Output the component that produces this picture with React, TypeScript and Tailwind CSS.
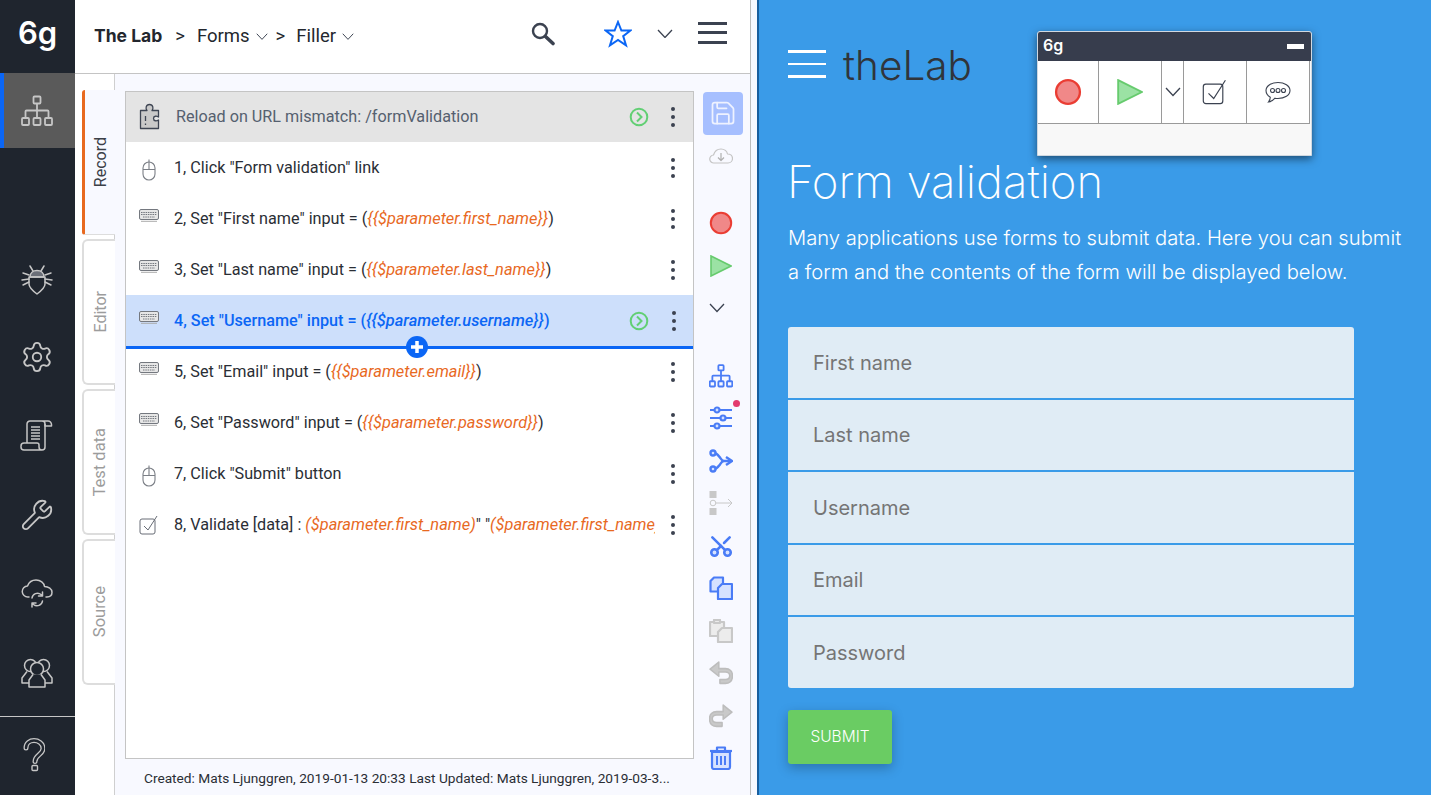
import React from "react";
import { Settings, Wrench, Scissors, Save } from "lucide-react";

const G = "#c6c6c6";
const B = "#4a7cf6";
const BL = "#d6e2ff";
const D = "#3b4250";

function Hier({ c, w = 32, sw = 1.8 }: { c: string; w?: number; sw?: number }) {
  return (
    <svg width={w} height={w} viewBox="0 0 32 32" fill="none" stroke={c} strokeWidth={sw}>
      <rect x="12.5" y="1.5" width="7" height="7" rx="1" />
      <rect x="1" y="23" width="7" height="7" rx="1" />
      <rect x="12.5" y="23" width="7" height="7" rx="1" />
      <rect x="24" y="23" width="7" height="7" rx="1" />
      <path d="M16 8.5V23M4.5 23v-6.5a1 1 0 0 1 1-1h21a1 1 0 0 1 1 1V23" />
    </svg>
  );
}

function Bug() {
  return (
    <svg width="32" height="34" viewBox="0 0 32 34" fill="none" stroke={G} strokeWidth="1.5" strokeLinecap="round" strokeLinejoin="round">
      <path d="M9 4l3 5M23 4l-3 5" />
      <path d="M9 15c0-4 3-6.5 7-6.5s7 2.500 7 6.500z" fill="#6b6f78" />
      <path d="M8 15h16v7c0 4-4 7-8 10-4-3-8-6-8-10z" />
      <path d="M8 13L2 11M8 17l-7 1M8 20l-6 3M24 13l6-2M24 17l7 1M24 20l6 3" />
    </svg>
  );
}

function Scroll() {
  return (
    <svg width="33" height="32" viewBox="0 0 33 32" fill="none" stroke={G} strokeWidth="1.500" strokeLinejoin="round">
      <path d="M7 23V4a3 3 0 0 1 3-3h18a3.500 3.500 0 0 1 3.500 3.500V6H25V4a3 3 0 0 0-3-3" />
      <path d="M25 4v23a3 3 0 0 1-3 3H4a3 3 0 0 1-3-3v-1a3 3 0 0 1 3-3h13a2 2 0 0 1 2 2v2a3 3 0 0 0 3 3" />
      <path d="M11 7h9M11 10h9M11 13h9M11 16h9M11 19h9" strokeWidth="1.300" />
    </svg>
  );
}

function CloudSync() {
  return (
    <svg width="32" height="32" viewBox="0 0 32 32" fill="none" stroke={G} strokeWidth="1.5" strokeLinecap="round" strokeLinejoin="round">
      <path d="M8 19H7a5.500 5.500 0 0 1-.5-11C8 4 11.500 2 15 2c4.500 0 8 3 8.500 6.500 4 0 7.500 2.500 7.500 5.800 0 3-2 4.700-5 4.700h-1" />
      <path d="M11 20a5.500 5.500 0 0 1 9-3.500l1.500 1.500M21.500 14v4h-4" />
      <path d="M21.500 23a5.500 5.500 0 0 1-9 3.500L11 25M11 29v-4h4" />
    </svg>
  );
}

function People() {
  return (
    <svg width="32" height="30" viewBox="0 0 32 30" fill="none" stroke={G} strokeWidth="1.5" strokeLinejoin="round">
      <circle cx="9.500" cy="7.500" r="6" />
      <circle cx="22.500" cy="7.500" r="6" />
      <path d="M6 13.500L1 20v5h7M26 13.500L31 20v5h-7" />
      <circle cx="16" cy="11" r="6.500" fill="#1f252e" />
      <path d="M12 16.500L8 22v7h16v-7l-4-5.500" fill="#1f252e" />
    </svg>
  );
}

function Question() {
  const d = "M5 10c0-5 4-7.500 8-7.500s9 2.500 9 8c0 6-8 6.500-8 13";
  return (
    <svg width="24" height="34" viewBox="0 0 24 34" fill="none" strokeLinecap="round">
      <path d={d} stroke={G} strokeWidth="5" />
      <path d={d} stroke="#1f252e" strokeWidth="2.400" />
      <rect x="11" y="27.500" width="5.500" height="5" rx="1" stroke={G} strokeWidth="1.400" />
    </svg>
  );
}

function Puzzle() {
  return (
    <svg width="26" height="28" viewBox="0 0 26 28" fill="#c9c9c9" stroke="#3d4452" strokeWidth="1.300" strokeLinejoin="round">
      <path d="M1.500 7.500h6.500c-1.500-1.500-1.500-6 2.500-6s4 4.500 2.500 6h6.500v6.500c-1.500-1-5-1.500-5 1.500s3.500 2.500 5 1.500v8.500h-18z" />
      <path d="M6.500 13v5M6.500 20.500v1.500" fill="none" />
    </svg>
  );
}

function Mouse() {
  return (
    <svg width="14" height="22" viewBox="0 0 14 22" fill="none" stroke="#7b7f86" strokeWidth="1.100" className="ml-[3px] mt-[4px]">
      <rect x="1" y="3" width="12" height="18" rx="6" />
      <path d="M1 10.500h12M7 0.500V10.500" />
    </svg>
  );
}

function Keyboard({ c = "#74787f" }: { c?: string }) {
  return (
    <svg width="20" height="13" viewBox="0 0 20 13" fill="#e6e6e6" stroke={c} strokeWidth="1" className="mb-[7px]">
      <rect x="0.500" y="0.500" width="19" height="10" rx="1.500" />
      <path d="M2 3.500h16M2 5.500h16M4 8h12" strokeDasharray="1.500 0.800" />
      <path d="M2 12.300h16" stroke="#aaaaaa" />
    </svg>
  );
}

function Check({ c = "#686d76", s = 20 }: { c?: string; s?: number }) {
  return (
    <svg width={s} height={s} viewBox="0 0 20 20" fill="none" stroke={c} strokeWidth={s > 20 ? 0.9 : 1}>
      <rect x="1" y="4" width="15" height="15" rx="2" />
      <path d="M5 11l4 4 9-14" />
    </svg>
  );
}

function Run() {
  return (
    <svg width="20" height="20" viewBox="0 0 20 20" fill="none" stroke="#62cf74" strokeWidth="2">
      <circle cx="10" cy="10" r="8.300" />
      <path d="M8 5.500l4.500 4.500L8 14.500" />
    </svg>
  );
}

function Rec({ s = 24 }: { s?: number }) {
  return (
    <svg width={s} height={s} viewBox="0 0 24 24">
      <circle cx="12" cy="12" r="10.200" fill="#f08888" stroke="#ea3d33" strokeWidth="2" />
    </svg>
  );
}

function Play({ w = 22 }: { w?: number }) {
  return (
    <svg width={w} height={w} viewBox="0 0 22 22">
      <path d="M1 1l20 10L1 21z" fill="#9be2a4" stroke="#67cb6e" strokeWidth="1.600" />
    </svg>
  );
}

function Sliders() {
  return (
    <svg width="24" height="24" viewBox="0 0 24 24" fill={BL} stroke={B} strokeWidth="2.200">
      <path d="M1 4h22M1 12h22M1 20h22" />
      <circle cx="8" cy="4" r="2.500" />
      <circle cx="14" cy="12" r="2.500" />
      <circle cx="8" cy="20" r="2.500" />
    </svg>
  );
}

function Split() {
  return (
    <svg width="24" height="24" viewBox="0 0 24 24" fill={BL} stroke={B} strokeWidth="2.400" strokeLinejoin="round">
      <path d="M5 4c3 0 4 2 6 4.500 1 1.500 2 3.500 4 3.500h6M5 20c3 0 4-2 6-4.500 1-1.500 2-3.500 4-3.500" fill="none" />
      <circle cx="4" cy="4" r="2.500" />
      <circle cx="4" cy="20" r="2.500" />
      <path d="M17 8l6 4-6 4" fill="none" />
    </svg>
  );
}

function Nodes() {
  return (
    <svg width="24" height="24" viewBox="0 0 24 24" fill="#c8c8c8" stroke="#c8c8c8" strokeWidth="1">
      <rect x="1" y="0.500" width="6" height="6" />
      <rect x="1" y="17.500" width="6" height="6" />
      <circle cx="4" cy="12" r="2.800" fill="#f8f9ff" />
      <path d="M7 12h16M19 8l4 4-4 4" fill="none" />
    </svg>
  );
}

function CopyI({ c, f }: { c: string; f: string }) {
  return (
    <svg width="24" height="24" viewBox="0 0 24 24" fill={f} stroke={c} strokeWidth="2.200" strokeLinejoin="round">
      <path d="M5 1.500h9v14H1.500V5z" />
      <path d="M13 8h10v15H9V12z" />
    </svg>
  );
}

function PasteI() {
  return (
    <svg width="24" height="24" viewBox="0 0 24 24" fill="#ececec" stroke="#c8c8c8" strokeWidth="2.200" strokeLinejoin="round">
      <path d="M1 3h14v14H1z" />
      <path d="M5 1h6v3H5z" />
      <path d="M13 9h10v14H9V13z" />
    </svg>
  );
}

function Undo({ flip }: { flip?: boolean }) {
  return (
    <svg width="24" height="24" viewBox="0 0 22 22" fill="none" className={flip ? "-scale-x-100" : ""} strokeLinejoin="round">
      <path d="M9 1L1 7.500 9 14v-4h6c3 0 4 1.500 4 3.500S18 17 15 17h-5v3.500h5c4.500 0 6.500-3 6.500-7s-2.500-6.500-6.500-6.500H9z" fill="#c9c9c9" stroke="#bdbdbd" strokeWidth="1.400" />
    </svg>
  );
}

function Trash() {
  return (
    <svg width="24" height="24" viewBox="0 0 24 24" fill={BL} stroke={B} strokeWidth="2.200" strokeLinejoin="round">
      <path d="M1 5h22" fill="none" />
      <path d="M8 4V1.500h8V4" fill="none" />
      <path d="M3 6h18v15a2 2 0 0 1-2 2H5a2 2 0 0 1-2-2z" />
      <path d="M8 10v9M12 10v9M16 10v9" strokeWidth="2" />
    </svg>
  );
}

function Bubble() {
  return (
    <svg width="26" height="26" viewBox="0 0 26 26" fill="none" stroke={D} strokeWidth="1.100">
      <path d="M13 3.500c6.500 0 12 3.300 12 8s-5.500 8-12 8c-1.200 0-2 0-3-.3C8.500 21 6.500 22.500 3.500 23c1.200-1.500 1.800-3 1.800-4.700C2.500 16.500 1 14.200 1 11.500c0-4.700 5.500-8 12-8z" />
      <circle cx="7.500" cy="11.500" r="2" />
      <circle cx="13" cy="11.500" r="2" />
      <circle cx="18.500" cy="11.500" r="2" />
    </svg>
  );
}

function Chev({ w = 16, c = D }: { w?: number; c?: string }) {
  return (
    <svg width={w} height={w * 0.6} viewBox="0 0 16 9.600" fill="none" stroke={c} strokeWidth="1.300">
      <path d="M1 1l7 7.500L15 1" />
    </svg>
  );
}

function Star() {
  return (
    <svg width="28" height="28" viewBox="0 0 28 28" fill="none" stroke="#0b66f5" strokeWidth="2">
      <path d="M14 2l3.400 8.500H26.500l-7.300 5.600 2.800 9.200-8-5.400-8 5.400 2.800-9.200-7.300-5.600h9.100z" />
    </svg>
  );
}

function Magnifier() {
  return (
    <svg width="24" height="24" viewBox="0 0 24 24" fill="none" stroke={D}>
      <circle cx="9" cy="9" r="7" strokeWidth="2.400" />
      <path d="M14.500 14.500L22 21.500" strokeWidth="3.600" strokeLinecap="round" />
    </svg>
  );
}

function CloudDown() {
  return (
    <svg width="24" height="16" viewBox="0 0 24 16" fill="none" stroke="#c4c4c4" strokeWidth="1.200" strokeLinejoin="round">
      <path d="M6 15H5a4 4 0 0 1-.5-8C5.500 3.500 8.500 1 12 1c3.500 0 6 2.500 6.500 5 3 0 5 2 5 4.500S21.500 15 19 15z" />
      <path d="M12 5v7M9 9.500l3 3 3-3" stroke="#b0b0b0" />
    </svg>
  );
}

const rail = [
  <Bug key="a" />,
  <Settings key="b" size={34} strokeWidth={1.300} color={G} />,
  <Scroll key="c" />,
  <Wrench key="d" size={34} strokeWidth={1.300} color={G} />,
  <CloudSync key="e" />,
  <People key="f" />,
];

const o = "text-[#e8691f] italic text-[16.400px]";
const rows: { icon: React.ReactNode; text: React.ReactNode; sel?: boolean; run?: boolean }[] = [
  { icon: <Mouse />, text: <>1, Click "Form validation" link</> },
  { icon: <Keyboard />, text: <>2, Set "First name" input = (<span className={o}>{"{{$parameter.first_name}}"}</span>)</> },
  { icon: <Keyboard />, text: <>3, Set "Last name" input = (<span className={o}>{"{{$parameter.last_name}}"}</span>)</> },
  { icon: <Keyboard />, sel: true, run: true, text: <>4, Set "Username" input = (<span className="italic text-[16.400px]">{"{{$parameter.username}}"}</span>)</> },
  { icon: <Keyboard />, text: <>5, Set "Email" input = (<span className={o}>{"{{$parameter.email}}"}</span>)</> },
  { icon: <Keyboard />, text: <>6, Set "Password" input = (<span className={o}>{"{{$parameter.password}}"}</span>)</> },
  { icon: <Mouse />, text: <>7, Click "Submit" button</> },
  { icon: <Check />, text: <>8, Validate [data] : <span className={o}>($parameter.first_name)</span>" "<span className={o}>($parameter.first_name)</span></> },
];

function Dots({ ml = "ml-[24px]" }: { ml?: string }) {
  return (
    <div className={"flex flex-col gap-[4px] w-[4px] shrink-0 " + ml}>
      <i className="block size-[4px] rounded-full bg-[#3b4250]" />
      <i className="block size-[4px] rounded-full bg-[#3b4250]" />
      <i className="block size-[4px] rounded-full bg-[#3b4250]" />
    </div>
  );
}

function Tab({ label, on, size }: { label: string; on?: boolean; size: string }) {
  return (
    <div
      className={
        on
          ? "h-[145px] flex items-center justify-center bg-[#f8f9ff] border-l-[3px] border-[#e8691f] rounded-tl-[3px] rounded-bl-[3px] relative w-[33px] border-b border-b-[#dddddd]"
          : "h-[146px] flex items-center justify-center bg-white border-2 border-r-0 border-[#dddddd] rounded-tl-[6px] rounded-bl-[6px] w-[33px]"
      }
    >
      <span className={"[writing-mode:vertical-rl] rotate-180 ml-[2px] " + size + " " + (on ? "text-[#3b3f47]" : "text-[#9c9c9c]")}>{label}</span>
    </div>
  );
}

function Tool({ children, box, extra }: { children: React.ReactNode; box?: boolean; extra?: string }) {
  return (
    <div className={"h-[42.5px] w-[40px] flex items-center justify-center shrink-0 relative " + (box ? "bg-[#a6bfff] rounded-[4px] " : "pr-[4px] ") + (extra || "")}>
      {children}
    </div>
  );
}

const Cell = ({ w, children }: { w: string; children: React.ReactNode }) => (
  <div className={w + " flex items-center justify-center border-r border-[#9a9a9a] h-full"}>{children}</div>
);

export default function App() {
  return (
    <div className="flex w-[1431px] h-[795px] overflow-hidden bg-white font-['Roboto',sans-serif]">
      {/* left rail */}
      <aside className="w-[75px] shrink-0 bg-[#1f252e] flex flex-col items-stretch">
        <div className="h-[73px] flex items-center justify-center text-white text-[31px] font-semibold leading-none font-['Inter',sans-serif] pb-[9px]">6g</div>
        <div className="h-[75px] bg-[#5a5a5a] border-l-[4px] border-[#0b66f5] flex items-center justify-center pr-[6px]">
          <Hier c={G} />
        </div>
        <div className="flex flex-col items-center mt-[91px]">
          {rail.map((r, i) => (
            <div key={i} className="h-[79px] w-full flex items-center justify-center pr-[2px] -mb-[0.200px]">{r}</div>
          ))}
        </div>
        <div className="mt-[4px] border-t border-[#c6c6c6] flex-1 flex items-center justify-center pb-[2px] pr-[10px]">
          <Question />
        </div>
      </aside>

      {/* main left panel */}
      <div className="w-[676px] shrink-0 flex flex-col border-r border-[#bdbdbd]">
        <header className="h-[74px] shrink-0 border-b border-[#c4c4c4] flex items-center pl-[19px] pr-[23px] text-[18.500px] text-[#23272e]">
          <span className="font-bold mr-[13px] font-['Inter',sans-serif] text-[17.500px]">The Lab</span>
          <span className="mr-[12px]">&gt;</span>
          <span className="mr-[6px]">Forms</span>
          <Chev w={12} />
          <span className="mx-[8px]">&gt;</span>
          <span className="mr-[6px] ml-[3px]">Filler</span>
          <Chev w={12} />
          <div className="ml-auto flex items-center mb-[6px]">
            <span className="mr-[49px] flex"><Magnifier /></span>
            <Star />
            <span className="ml-[25px] mr-[25px]"><Chev w={16} /></span>
            <div className="flex flex-col gap-[6.500px] w-[29px] -mt-[2px]">
              <i className="block h-[3px] bg-[#3b4250]" />
              <i className="block h-[3px] bg-[#3b4250]" />
              <i className="block h-[3px] bg-[#3b4250]" />
            </div>
          </div>
        </header>

        <div className="flex-1 flex min-h-0">
          {/* tabs */}
          <div className="w-[39px] shrink-0 pl-[7px] pt-[16px] flex flex-col gap-[4px] relative z-10">
            <Tab label="Record" on size="text-[16px]" />
            <Tab label="Editor" size="text-[16px]" />
            <Tab label="Test data" size="text-[16.500px]" />
            <Tab label="Source" size="text-[16.500px]" />
          </div>

          <div className="flex-1 flex bg-[#f8f9ff] border-l border-[#cfcfcf] min-w-0">
            <div className="w-[580px] shrink-0 pl-[10px] pt-[17px] flex flex-col">
              <div className="h-[668px] w-[569px] border border-[#c4c4c4] bg-white flex flex-col">
                <div className="h-[50px] shrink-0 bg-[#e4e4e4] flex items-center pl-[13px] pr-[18px] text-[16.200px] text-[#55606f]">
                  <span className="w-[37px] shrink-0 flex"><Puzzle /></span>
                  <span className="flex-1">Reload on URL mismatch: /formValidation</span>
                  <Run />
                  <Dots ml="ml-[22px]" />
                </div>
                {rows.map((r, i) => (
                  <div
                    key={i}
                    className={
                      "h-[51px] shrink-0 flex items-center pl-[13px] pr-[17px] text-[16.200px] relative " +
                      (r.sel ? "bg-[#cddffb] text-[#0b66f5] font-medium" : "text-[#2a2e35]")
                    }
                  >
                    <span className="w-[35px] shrink-0 flex">{r.icon}</span>
                    <span className={(r.run ? "flex-1 whitespace-nowrap" : "w-[481px] overflow-hidden whitespace-nowrap") + " pt-[1px]"}>{r.text}</span>
                    {r.run && <Run />}
                    <Dots ml={r.run ? "ml-[23px]" : "ml-[16px]"} />
                    {r.sel && (
                      <>
                        <div className="absolute left-0 right-0 -bottom-[3px] h-[3px] bg-[#0b66f5] z-10" />
                        <div className="absolute left-[280px] bottom-[-12px] size-[22px] rounded-full bg-[#0b66f5] z-20 flex items-center justify-center">
                          <svg width="14" height="14" viewBox="0 0 14 14"><path d="M7 1v12M1 7h12" stroke="#fff" strokeWidth="3.500" /></svg>
                        </div>
                      </>
                    )}
                  </div>
                ))}
              </div>
              <div className="pl-[19px] pt-[9px] text-[13.700px] text-[#2a2e35] whitespace-nowrap">
                Created: Mats Ljunggren, 2019-01-13 20:33 Last Updated: Mats Ljunggren, 2019-03-3...
              </div>
            </div>

            {/* toolbar */}
            <div className="pl-[8px] pt-[18px] flex flex-col">
              <Tool box><Save size={28} strokeWidth={1.500} color="#eef2ff" /></Tool>
              <Tool><CloudDown /></Tool>
              <Tool extra="mt-[25px]"><Rec /></Tool>
              <Tool><Play /></Tool>
              <Tool><span className="mr-[8px] flex"><Chev w={16} /></span></Tool>
              <Tool extra="mt-[25px]"><Hier c={B} w={24} sw={2.400} /></Tool>
              <Tool>
                <Sliders />
                <i className="absolute right-[3px] top-[3px] block size-[7px] rounded-full bg-[#e33b6d]" />
              </Tool>
              <Tool><Split /></Tool>
              <Tool><Nodes /></Tool>
              <Tool><Scissors size={26} strokeWidth={2.400} color={B} fill={BL} className="-rotate-90" /></Tool>
              <Tool><CopyI c={B} f={BL} /></Tool>
              <Tool><PasteI /></Tool>
              <Tool><Undo /></Tool>
              <Tool><Undo flip /></Tool>
              <Tool><Trash /></Tool>
            </div>
          </div>
        </div>
      </div>

      <div className="w-[6px] shrink-0 bg-[#f8f9ff]" />

      {/* app under test */}
      <main className="flex-1 bg-[#3a9be8] border-l-[2px] border-[#1a5f9e] pl-[29px] font-['Inter',sans-serif] relative">
        <div className="flex items-center h-[28px] mt-[50px]">
          <div className="flex flex-col gap-[10px] w-[38px]">
            <i className="block h-[3px] bg-white" />
            <i className="block h-[2px] bg-white" />
            <i className="block h-[3px] bg-white" />
          </div>
          <span className="ml-[17px] mt-[4px] text-[40.500px] font-light text-[#30353b] leading-none">theLab</span>
        </div>
        <h1 className="mt-[76px] -ml-[1px] text-[45.500px] leading-[56px] font-extralight text-white">Form validation</h1>
        <p className="mt-[11px] w-[625px] text-[20.200px] leading-[33.500px] font-light text-white">
          Many applications use forms to submit data. Here you can submit a form and the contents of the form will be displayed below.
        </p>
        <form className="mt-[39px] w-[566px] flex flex-col gap-[2px]">
          {["First name", "Last name", "Username", "Email", "Password"].map((p, i) => (
            <div
              key={p}
              className={
                "h-[70.500px] bg-[#e0ecf5] flex items-center pl-[25px] pt-[1px] text-[20px] text-[#757575] font-normal " +
                (i === 0 ? "rounded-t-[3px]" : i === 4 ? "rounded-b-[3px]" : "")
              }
            >
              {p}
            </div>
          ))}
        </form>
        <button className="mt-[22px] w-[104px] h-[54px] pt-[1px] bg-[#6acc63] rounded-[3px] text-white text-[15.500px] font-light shadow-[0_4px_12px_rgba(0,0,0,0.25)]">SUBMIT</button>

        {/* floating recorder */}
        <div className="absolute left-[278px] top-[31px] w-[275px] h-[125px] bg-[#f8f8f8] rounded-t-[3px] shadow-[0_3px_8px_rgba(0,0,0,0.5)] border border-[#d0d8e0] flex flex-col">
          <div className="h-[29px] bg-[#373d4d] flex items-center justify-between pl-[5px] pr-[7px] rounded-t-[2px]">
            <span className="text-white font-semibold text-[16px] leading-none font-['Inter',sans-serif] pb-[3px]">6g</span>
            <i className="block w-[17px] h-[5px] bg-white" />
          </div>
          <div className="h-[63px] w-[272px] bg-white flex border-b border-[#9a9a9a]">
            <Cell w="w-[61px]"><Rec s={28} /></Cell>
            <Cell w="w-[63px]"><Play w={26} /></Cell>
            <Cell w="w-[22px]"><Chev w={16} /></Cell>
            <Cell w="w-[63px]"><Check c={D} s={26} /></Cell>
            <Cell w="w-[63px]"><Bubble /></Cell>
          </div>
        </div>
      </main>
    </div>
  );
}
